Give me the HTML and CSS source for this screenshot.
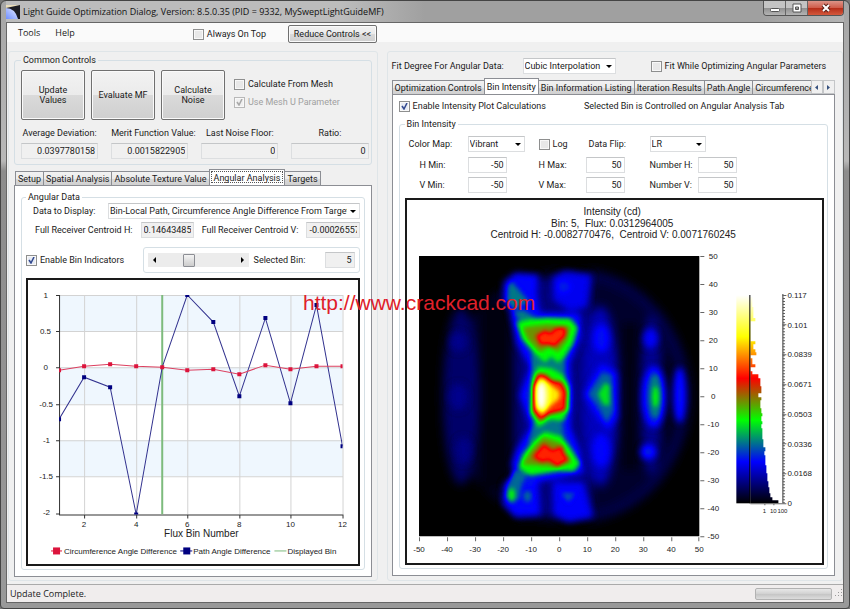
FILE: index.html
```html
<!DOCTYPE html>
<html lang="en">
<head>
    <meta charset="UTF-8">
    <meta name="viewport" content="width=device-width, initial-scale=1.0">
    <title>Light Guide Optimization Dialog</title>
    <link rel="stylesheet" href="styles.css">
</head>
<body>
<div class="window">
    <header class="titlebar">
        <svg class="app-icon" width="14" height="14" viewBox="0 0 14 14" aria-hidden="true">
            <defs>
                <linearGradient id="lens" x1="0" y1="1" x2="1" y2="0">
                    <stop offset="0" stop-color="#6f8fff"/>
                    <stop offset="1" stop-color="#e8ecff"/>
                </linearGradient>
            </defs>
            <rect width="14" height="14" fill="#1c1c22"/>
            <path d="M0 3 Q9 3 12 14 H0 Z" fill="url(#lens)"/>
            <path d="M0 0 H14 L0 3 Z" fill="#e9dcb8"/>
        </svg>
        <span class="title">Light Guide Optimization Dialog, Version: 8.5.0.35 (PID = 9332, MySweptLightGuideMF)</span>
        <div class="window-buttons">
            <button type="button" aria-label="Minimize"><svg width="10" height="10" viewBox="0 0 10 10"><rect x="0.5" y="5.500" width="9" height="3" rx="1" fill="#fff" stroke="#555"/></svg></button>
            <button type="button" aria-label="Maximize"><svg width="10" height="10" viewBox="0 0 10 10"><path d="M1 1 H9 V9 H1 Z M3.500 4 V6.500 H6.500 V4 Z" fill="#fff" stroke="#555" fill-rule="evenodd"/></svg></button>
            <button type="button" class="close" aria-label="Close"><svg width="10" height="10" viewBox="0 0 10 10"><path d="M2 2 L8 8 M8 2 L2 8" stroke="#5a2018" stroke-width="4"/><path d="M2 2 L8 8 M8 2 L2 8" stroke="#fff" stroke-width="2"/></svg></button>
        </div>
    </header>

    <div class="client">
        <nav class="menubar">
            <button type="button" class="menu">Tools</button>
            <button type="button" class="menu">Help</button>
            <label class="check on-top"><input type="checkbox"> Always On Top</label>
            <button type="button" class="btn reduce">Reduce Controls &lt;&lt;</button>
        </nav>

        <main class="columns">
            <section class="panel left">
                <fieldset class="group common">
                    <legend>Common Controls</legend>
                    <div class="actions">
                        <button type="button" class="btn big">Update<br>Values</button>
                        <button type="button" class="btn big">Evaluate MF</button>
                        <button type="button" class="btn big">Calculate<br>Noise</button>
                        <div class="mesh">
                            <label class="check"><input type="checkbox"> Calculate From Mesh</label>
                            <label class="check disabled"><input type="checkbox" checked disabled> Use Mesh U Parameter</label>
                        </div>
                    </div>
                    <div class="readouts">
                        <label>Average Deviation: <input type="text" value="0.0397780158" readonly></label>
                        <label>Merit Function Value: <input type="text" value="0.0015822905" readonly></label>
                        <label>Last Noise Floor: <input type="text" value="0" readonly></label>
                        <label>Ratio: <input type="text" value="0" readonly></label>
                    </div>
                </fieldset>

                <div class="tabs">
                    <button type="button" class="tab">Setup</button>
                    <button type="button" class="tab">Spatial Analysis</button>
                    <button type="button" class="tab">Absolute Texture Value</button>
                    <button type="button" class="tab active focused">Angular Analysis</button>
                    <button type="button" class="tab">Targets</button>
                </div>
                <div class="tab-page">
                    <fieldset class="group angular">
                        <legend>Angular Data</legend>
                        <div class="row display-row">
                            <label for="display">Data to Display:</label>
                            <select id="display"><option>Bin-Local Path, Circumference Angle Difference From Target</option></select>
                        </div>
                        <div class="row centroid-row">
                            <label for="centroidH">Full Receiver Centroid H:</label>
                            <input type="text" id="centroidH" value="0.1464348567" readonly>
                            <label for="centroidV">Full Receiver Centroid V:</label>
                            <input type="text" id="centroidV" value="-0.0002655714" readonly>
                        </div>
                        <div class="row bin-row">
                            <label class="check"><input type="checkbox" checked> Enable Bin Indicators</label>
                            <div class="bin-box">
                                <div class="scroller">
                                    <button type="button" aria-label="Previous bin"><svg width="3" height="6" viewBox="0 0 3 6"><path d="M3 0 V6 L0 3 Z"/></svg></button>
                                    <input type="range" id="binSlider" min="1" max="12" value="5" aria-label="Bin">
                                    <button type="button" aria-label="Next bin"><svg width="3" height="6" viewBox="0 0 3 6"><path d="M0 0 V6 L3 3 Z"/></svg></button>
                                </div>
                                <label for="selectedBin">Selected Bin:</label>
                                <input type="text" id="selectedBin" value="5" readonly>
                            </div>
                        </div>

                        <svg class="chart" viewBox="28 280 329 284" role="img" aria-label="Angle difference by flux bin">
                            <g fill="#eff7fe">
                                <rect x="59" y="295" width="283" height="36"/>
                                <rect x="59" y="367" width="283" height="37"/>
                                <rect x="59" y="440" width="283" height="36"/>
                            </g>
                            <path class="grid-line" d="M59 295.500H342M59 331.500H342M59 367.500H342M59 404.500H342M59 440.500H342M59 476.500H342M84.500 295V514M136.500 295V514M187.500 295V514M239.500 295V514M290.500 295V514M342.500 295V514"/>
                            <path class="axis" d="M59.500 295V514.500H342M56 295.500H59M56 331.500H59M56 367.500H59M56 404.500H59M56 440.500H59M56 476.500H59M56 513.500H59M84.500 514V518M136.500 514V518M187.500 514V518M239.500 514V518M290.500 514V518M342.500 514V518"/>
                            <path d="M162 295V514" stroke="#7dbb7d" stroke-width="2"/>
                            <clipPath id="plotClip"><rect x="59" y="295" width="283" height="219"/></clipPath>
                            <g clip-path="url(#plotClip)">
                                <polyline class="line path-line" points="59,419 84,377 110,387 136,514 162,367 187,295 213,322 239,396 265,318 290,403 316,305 342,446"/>
                                <polyline class="line circ-line" points="59,370 84,366 110,364 136,366 162,367 187,370 213,369 239,374 265,365 290,369 316,366 342,366"/>
                                <path fill="#000080" d="M57 417h4v4h-4zM82 375h4v4h-4zM108 385h4v4h-4zM134 512h4v4h-4zM185 293h4v4h-4zM211 320h4v4h-4zM237 394h4v4h-4zM263 316h4v4h-4zM288 401h4v4h-4zM314 303h4v4h-4zM340 444h4v4h-4z"/>
                                <path fill="#dc143c" d="M57 368h4v4h-4zM82 364h4v4h-4zM108 362h4v4h-4zM134 364h4v4h-4zM160 365h4v4h-4zM185 368h4v4h-4zM211 367h4v4h-4zM237 372h4v4h-4zM263 363h4v4h-4zM288 367h4v4h-4zM314 364h4v4h-4zM340 364h4v4h-4z"/>
                            </g>
                            <g class="tick" text-anchor="end">
                                <text x="48" y="298">1</text>
                                <text x="51" y="334">0.5</text>
                                <text x="48" y="370">0</text>
                                <text x="53" y="407">-0.5</text>
                                <text x="50" y="443">-1</text>
                                <text x="53" y="479">-1.5</text>
                                <text x="50" y="515">-2</text>
                            </g>
                            <g class="tick" text-anchor="middle">
                                <text x="84" y="527">2</text>
                                <text x="136" y="527">4</text>
                                <text x="187" y="527">6</text>
                                <text x="239" y="527">8</text>
                                <text x="290" y="527">10</text>
                                <text x="342" y="527">12</text>
                            </g>
                            <text class="axis-title" x="201" y="537" text-anchor="middle">Flux Bin Number</text>
                            <path d="M51 550.500H62" stroke="#dc143c"/>
                            <rect x="53" y="547" width="7" height="7" fill="#dc143c"/>
                            <path d="M180 550.500H192" stroke="#000080"/>
                            <rect x="183" y="547" width="7" height="7" fill="#000080"/>
                            <path d="M274 550.500H286" stroke="#7dbb7d"/>
                            <g class="legend-text">
                                <text x="64" y="554">Circumference Angle Difference</text>
                                <text x="193" y="554">Path Angle Difference</text>
                                <text x="287" y="554">Displayed Bin</text>
                            </g>
                        </svg>
                    </fieldset>
                </div>
            </section>

            <section class="panel right">
                <div class="row fit-row">
                    <label for="fit">Fit Degree For Angular Data:</label>
                    <select id="fit"><option>Cubic Interpolation</option></select>
                    <label class="check"><input type="checkbox"> Fit While Optimizing Angular Parameters</label>
                </div>
                <div class="tabs scrolling">
                    <div class="tab-strip">
                        <button type="button" class="tab">Optimization Controls</button>
                        <button type="button" class="tab active">Bin Intensity</button>
                        <button type="button" class="tab">Bin Information Listing</button>
                        <button type="button" class="tab">Iteration Results</button>
                        <button type="button" class="tab">Path Angle</button>
                        <button type="button" class="tab">Circumference Parameters</button>
                    </div>
                    <button type="button" class="tab-arrow" aria-label="Scroll tabs left"><svg width="3" height="5" viewBox="0 0 3 5"><path d="M3 0 V5 L0 2.500 Z"/></svg></button>
                    <button type="button" class="tab-arrow" aria-label="Scroll tabs right"><svg width="3" height="5" viewBox="0 0 3 5"><path d="M0 0 V5 L3 2.500 Z"/></svg></button>
                </div>
                <div class="tab-page">
                    <div class="row enable-row">
                        <label class="check"><input type="checkbox" checked> Enable Intensity Plot Calculations</label>
                        <span>Selected Bin is Controlled on Angular Analysis Tab</span>
                    </div>
                    <fieldset class="group intensity">
                        <legend>Bin Intensity</legend>
                        <div class="map-row">
                            <label for="colorMap">Color Map:</label>
                            <select id="colorMap"><option>Vibrant</option></select>
                            <label class="check"><input type="checkbox"> Log</label>
                            <label for="flip">Data Flip:</label>
                            <select id="flip"><option>LR</option></select>
                        </div>
                        <div class="limits">
                            <label for="hMin">H Min:</label><input type="text" id="hMin" value="-50">
                            <label for="hMax">H Max:</label><input type="text" id="hMax" value="50">
                            <label for="numH">Number H:</label><input type="text" id="numH" value="50">
                            <label for="vMin">V Min:</label><input type="text" id="vMin" value="-50">
                            <label for="vMax">V Max:</label><input type="text" id="vMax" value="50">
                            <label for="numV">Number V:</label><input type="text" id="numV" value="50">
                        </div>

                        <svg class="chart" viewBox="407 200 415 363" role="img" aria-label="Intensity map">
                            <defs>
                                <linearGradient id="vibrant" gradientUnits="userSpaceOnUse" x1="0" y1="503" x2="0" y2="295">
                                    <stop offset="0" stop-color="#000"/>
                                    <stop offset="0.2" stop-color="#00f"/>
                                    <stop offset="0.3" stop-color="#008080"/>
                                    <stop offset="0.4" stop-color="#0f0"/>
                                    <stop offset="0.5" stop-color="#808000"/>
                                    <stop offset="0.6" stop-color="#f00"/>
                                    <stop offset="0.8" stop-color="#ff0"/>
                                    <stop offset="1" stop-color="#fff"/>
                                </linearGradient>
                                <!-- grey level to vibrant colour map -->
                                <filter id="colorize" filterUnits="userSpaceOnUse" x="12" y="18" width="840" height="840" color-interpolation-filters="sRGB">
                                    <feGaussianBlur stdDeviation="2"/>
                                    <feComponentTransfer>
                                        <feFuncR type="table" tableValues="0 0 0 0 0 0.5 1 1 1 1 1"/>
                                        <feFuncG type="table" tableValues="0 0 0 0.5 1 0.5 0 0.5 1 1 1"/>
                                        <feFuncB type="table" tableValues="0 0.5 1 0.5 0 0 0 0 0 0.5 1"/>
                                    </feComponentTransfer>
                                </filter>
                                <filter id="wide" filterUnits="userSpaceOnUse" x="0" y="0" width="870" height="870" color-interpolation-filters="sRGB"><feGaussianBlur stdDeviation="14"/></filter>
                                <filter id="mid" filterUnits="userSpaceOnUse" x="0" y="0" width="870" height="870" color-interpolation-filters="sRGB"><feGaussianBlur stdDeviation="10"/></filter>
                                <filter id="fine" filterUnits="userSpaceOnUse" x="0" y="0" width="870" height="870" color-interpolation-filters="sRGB"><feGaussianBlur stdDeviation="6"/></filter>
                            </defs>

                            <g class="plot-title" text-anchor="middle">
                                <text x="612" y="215">Intensity (cd)</text>
                                <text x="612" y="227" xml:space="preserve">Bin: 5,  Flux: 0.0312964005</text>
                                <text x="613" y="238" xml:space="preserve">Centroid H: -0.0082770476,  Centroid V: 0.0071760245</text>
                            </g>

                            <svg x="419" y="256" width="280" height="280" viewBox="12 18 840 840">
                                <g filter="url(#colorize)">
                                    <rect x="-20" y="-20" width="900" height="900" fill="#000"/>
                                    <g filter="url(#wide)">
                                        <ellipse cx="450" cy="438" rx="362" ry="376" fill="#090909"/>
                                        <path d="M520 75 Q640 90 730 200 Q810 310 812 440 Q808 580 720 690 Q640 780 520 800" fill="none" stroke="#0f0f0f" stroke-width="30"/>
                                        <ellipse cx="138" cy="438" rx="54" ry="265" fill="#151515"/>
                                        <rect x="196" y="160" width="90" height="560" fill="#030303"/>
                                        <rect x="300" y="85" width="230" height="715" fill="#191919"/>
                                        <ellipse cx="556" cy="438" rx="54" ry="270" fill="#262626"/>
                                        <rect x="618" y="220" width="52" height="440" fill="#040404"/>
                                        <ellipse cx="708" cy="435" rx="32" ry="240" fill="#1d1d1d"/>
                                        <rect x="746" y="320" width="22" height="250" fill="#050505"/>
                                    </g>
                                    <g filter="url(#mid)">
                                        <ellipse cx="130" cy="275" rx="25" ry="30" fill="#1c1c1c"/>
                                        <ellipse cx="130" cy="440" rx="28" ry="40" fill="#1c1c1c"/>
                                        <ellipse cx="145" cy="600" rx="24" ry="40" fill="#1b1b1b"/>
                                        <path d="M266 95 L300 68 L370 74 L366 130 L378 205 L300 205 L264 150 Z" fill="#343434"/>
                                        <path d="M412 80 L450 62 L530 74 L516 170 L465 185 L414 150 Z" fill="#303030"/>
                                        <ellipse cx="445" cy="110" rx="20" ry="16" fill="#3a3a3a"/>
                                        <path d="M266 700 L300 675 L370 695 L376 794 L300 800 L262 762 Z" fill="#343434"/>
                                        <path d="M412 695 L505 695 L534 800 L460 816 L414 794 Z" fill="#323232"/>
                                        <path d="M286 190 L350 188 L496 190 L498 260 L464 340 L472 440 L466 530 L494 600 L506 670 L430 684 L305 706 L290 640 L304 600 L346 530 L314 435 L344 350 L306 280 Z" fill="#383838"/>
                                        <path d="M506 432 L558 340 L604 366 L606 500 L580 538 L552 510 Z" fill="#383838"/>
                                        <ellipse cx="716" cy="440" rx="36" ry="92" fill="#3a3a3a"/>
                                        <ellipse cx="793" cy="435" rx="19" ry="84" fill="#383838"/>
                                        <ellipse cx="558" cy="265" rx="24" ry="42" fill="#363636"/>
                                        <ellipse cx="558" cy="600" rx="27" ry="50" fill="#343434"/>
                                        <ellipse cx="706" cy="265" rx="22" ry="30" fill="#323232"/>
                                        <ellipse cx="699" cy="605" rx="23" ry="23" fill="#3a3a3a"/>
                                    </g>
                                    <g filter="url(#fine)">
                                        <path d="M278 110 L290 95 L325 135 L345 160 L325 160 L300 180 L276 155 Z" fill="#4b4b4b"/>
                                        <path d="M296 185 L325 180 L370 212 L330 238 Z" fill="#4c4c4c"/>
                                        <path d="M298 660 L340 665 L320 700 L312 745 L290 760 L272 740 L278 705 Z" fill="#484848"/>
                                        <ellipse cx="289" cy="733" rx="11" ry="20" fill="#646464"/>
                                        <ellipse cx="337" cy="738" rx="12" ry="17" fill="#484848"/>
                                        <path d="M438 728 L480 728 L460 757 Z" fill="#444"/>
                                        <rect x="350" y="300" width="98" height="90" fill="#4c4c4c"/>
                                        <path d="M362 490 L438 490 L446 570 L340 580 Z" fill="#4a4a4a"/>
                                        <path d="M520 432 L562 368 L588 376 L594 480 L574 515 L550 470 Z" fill="#474747"/>
                                        <path d="M548 432 L568 398 L584 405 L584 464 L565 465 Z" fill="#606060"/>
                                        <ellipse cx="719" cy="438" rx="19" ry="66" fill="#4c4c4c"/>
                                        <ellipse cx="721" cy="440" rx="10" ry="32" fill="#646464"/>
                                        <path d="M304 216 L350 206 L395 203 L465 205 L488 232 L474 280 L450 320 L428 338 L408 318 L390 338 L356 308 L320 266 Z" fill="#666"/>
                                        <path d="M350 385 L370 350 L410 355 L446 376 L463 410 L462 478 L444 512 L405 508 L370 532 L345 490 Z" fill="#666"/>
                                        <path d="M352 575 L388 544 L440 558 L465 592 L495 640 L477 663 L430 662 L345 676 L310 654 L322 615 Z" fill="#666"/>
                                    </g>
                                    <g filter="url(#fine)">
                                        <path d="M322 232 L395 222 L466 230 L455 272 L428 306 L404 290 L375 306 L340 270 Z" fill="#7c7c7c"/>
                                        <path d="M322 642 L348 600 L385 560 L435 578 L470 636 L425 650 Z" fill="#7c7c7c"/>
                                        <path d="M362 256 L392 240 L405 250 L420 234 L450 230 L452 256 L418 290 L400 282 L375 284 Z" fill="#a2a2a2"/>
                                        <path d="M352 620 L386 580 L412 600 L442 586 L446 610 L462 628 L426 650 L400 630 L380 636 Z" fill="#a0a0a0"/>
                                        <path d="M354 410 L368 370 L392 374 L410 390 L440 396 L454 425 L450 480 L402 492 L375 512 L354 482 Z" fill="#a2a2a2"/>
                                        <path d="M359 405 L374 382 L400 398 L434 425 L432 446 L402 470 L382 494 L360 474 Z" fill="#c8c8c8"/>
                                        <ellipse cx="382" cy="436" rx="20" ry="46" fill="#e0e0e0"/>
                                        <ellipse cx="378" cy="436" rx="12" ry="38" fill="#fff"/>
                                    </g>
                                </g>
                            </svg>

                            <path class="axis-soft" d="M700 256.500h4M700 284.500h4M700 312.500h4M700 340.500h4M700 368.500h4M700 396.500h4M700 424.500h4M700 452.500h4M700 480.500h4M700 508.500h4M700 536.500h4M419.500 537v4M447.500 537v4M475.500 537v4M503.500 537v4M531.500 537v4M559.500 537v4M587.500 537v4M615.500 537v4M643.500 537v4M671.500 537v4M698.500 537v4"/>
                            <g class="tick" text-anchor="middle">
                                <text x="713" y="259">50</text>
                                <text x="713" y="287">40</text>
                                <text x="713" y="315">30</text>
                                <text x="713" y="343">20</text>
                                <text x="713" y="371">10</text>
                                <text x="713" y="399">0</text>
                                <text x="713" y="427">-10</text>
                                <text x="713" y="455">-20</text>
                                <text x="713" y="483">-30</text>
                                <text x="713" y="511">-40</text>
                                <text x="713" y="539">-50</text>
                                <text x="419" y="552">-50</text>
                                <text x="447" y="552">-40</text>
                                <text x="475" y="552">-30</text>
                                <text x="503" y="552">-20</text>
                                <text x="531" y="552">-10</text>
                                <text x="559" y="552">0</text>
                                <text x="587" y="552">10</text>
                                <text x="615" y="552">20</text>
                                <text x="643" y="552">30</text>
                                <text x="671" y="552">40</text>
                                <text x="699" y="552">50</text>
                            </g>

                            <rect x="736" y="295" width="14" height="208" fill="url(#vibrant)"/>
                            <path fill="url(#vibrant)" d="M750 297h2v10h1v11h2v3h-5zM750 341h5v3h-2v5h2v3h1v3h-6zM750 358h2v6h3v3h-5zM750 371h2v3h6v4h2v8h1v7h-3v4h3v3h-1v8h1v5h1v3h-1v5h1v3h-1v4h1v11h1v8h2v4h-1v4h1v10h1v8h1v8h1v6h1v6h1v4h2v3h6v3h-28z"/>
                            <path d="M749.500 295V503" stroke="#000"/>
                            <path d="M782.500 294V503" stroke="#333"/>
                            <path d="M783.500 295V503" stroke="#555" stroke-width="2" stroke-dasharray="1 2"/>
                            <path class="axis-soft" d="M782 295.500h4M782 324.500h4M782 354.500h4M782 384.500h4M782 414.500h4M782 443.500h4M782 473.500h4M782 503.500h4M750 503.500h33M764.500 503v2M773.500 503v2"/>
                            <g class="tick">
                                <text x="787" y="298">0.117</text>
                                <text x="787" y="328">0.101</text>
                                <text x="787" y="357">0.0839</text>
                                <text x="787" y="387">0.0671</text>
                                <text x="787" y="417">0.0503</text>
                                <text x="787" y="447">0.0336</text>
                                <text x="787" y="476">0.0168</text>
                                <text x="787" y="506">0</text>
                            </g>
                            <g class="tiny" text-anchor="middle">
                                <text x="764" y="513">1</text>
                                <text x="773" y="513">10</text>
                                <text x="782" y="513">100</text>
                            </g>
                        </svg>
                    </fieldset>
                </div>
            </section>
        </main>

        <footer class="statusbar">
            <span>Update Complete.</span>
            <progress value="0" max="100" aria-label="Progress"></progress>
            <svg class="grip" width="9" height="9" viewBox="0 0 9 9" aria-hidden="true"><path fill="#999" d="M7 0h1v1h-1zM4 3h1v1h-1zM7 3h1v1h-1zM1 6h1v1h-1zM4 6h1v1h-1zM7 6h1v1h-1z"/></svg>
        </footer>
    </div>

    <div class="watermark">http://www.crackcad.com</div>
</div>
</body>
</html>
```
FILE: styles.css
```css
* {
    box-sizing: border-box;
}
body {
    margin: 0;
    font-family: Roboto, "Liberation Sans", Arial, sans-serif;
    font-size: 9px;
    line-height: 12px;
    color: #1a1a1a;
    background: #777;
}
button, input, select {
    font: inherit;
    color: inherit;
    margin: 0;
}
.window {
    position: relative;
    display: flex;
    flex-direction: column;
    min-height: 100vh;
    padding: 0 5px 5px;
    border: 1px solid #444;
    border-radius: 6px 6px 4px 4px;
    background: linear-gradient(#a5a5a5, #b8b8b8 160px, #8c8c8c 170px, #999);
}

/* title bar */
.titlebar {
    display: flex;
    align-items: center;
    height: 21px;
    font-family: "Open Sans", "Noto Sans", sans-serif;
    color: #111;
    background: linear-gradient(90deg, #bcbcbc 40%, #a0a0a0 50%, #a0a0a0 90%, #b4b4b4);
}
.app-icon {
    margin-right: 3px;
}
.title {
    flex: 1;
    min-width: 0;
    white-space: nowrap;
}
.window-buttons {
    display: flex;
    align-self: flex-start;
    height: 15px;
    border: 1px solid #555;
    border-top: 0;
    border-radius: 0 0 4px 4px;
    overflow: hidden;
}
.window-buttons button {
    display: flex;
    align-items: center;
    justify-content: center;
    width: 22px;
    padding: 0;
    border: 0;
    border-right: 1px solid #666;
    background: linear-gradient(#c4c4c4 50%, #8f8f8f 50%, #b4b4b4);
}
.window-buttons .close {
    width: 35px;
    border-right: 0;
    background: linear-gradient(#dc9488, #cf5a48 50%, #b42c18 50%, #d4583c);
}

/* client area */
.client {
    flex: 1;
    display: flex;
    flex-direction: column;
    border: 1px solid #666;
    background: #f0f0f0;
}
.menubar {
    display: flex;
    align-items: flex-start;
    height: 27px;
    padding-left: 7px;
    background: linear-gradient(#fafafa 19px, #f0f0f0 19px);
}
.menu {
    padding: 4px 4px 0;
    margin-right: 7px;
    border: 0;
    background: none;
    font-family: "Open Sans", "Noto Sans", sans-serif;
}
.on-top {
    margin: 5px 22px 0 107px;
}
.btn {
    padding: 0;
    border: 1px solid #707070;
    border-radius: 2px;
    background: linear-gradient(#f2f2f2, #ebebeb 50%, #dadada 50%, #cfcfcf);
    box-shadow: inset 0 0 0 1px #fafafa;
}
.reduce {
    width: 89px;
    height: 18px;
    margin-top: 2px;
}
.check {
    display: flex;
    align-items: center;
    gap: 3px;
    white-space: nowrap;
}
.disabled {
    color: #a0a0a0;
}
input[type="checkbox"] {
    appearance: none;
    flex: none;
    width: 11px;
    height: 11px;
    border: 1px solid #8e8f8f;
    background: #e8e8e8;
    box-shadow: inset 0 0 0 1px #f8f8f8;
}
input[type="checkbox"]:checked {
    background: #e8ecf4 url("data:image/svg+xml,%3Csvg xmlns='http://www.w3.org/2000/svg' viewBox='0 0 9 9'%3E%3Cpath d='M2 4 L4 7 L7 1' fill='none' stroke='%23334a90' stroke-width='1.6'/%3E%3C/svg%3E");
}
input[type="checkbox"]:disabled {
    border-color: #b8b8b8;
    background: #f0f0f0 url("data:image/svg+xml,%3Csvg xmlns='http://www.w3.org/2000/svg' viewBox='0 0 9 9'%3E%3Cpath d='M2 4 L4 7 L7 1' fill='none' stroke='%23a8a8a8' stroke-width='1.6'/%3E%3C/svg%3E");
}
input[type="text"] {
    width: 100%;
    min-width: 0;
    height: 16px;
    padding: 0 2px;
    border: 1px solid #dcdee0;
    border-top-color: #c4c6c8;
    background: #fff;
    text-align: right;
}
input[readonly] {
    background: #f0f0f0;
}
select {
    appearance: none;
    height: 16px;
    padding: 0 12px 0 1px;
    border: 1px solid #dcdee0;
    border-top-color: #c4c6c8;
    border-radius: 0;
    background: #fff url("data:image/svg+xml,%3Csvg xmlns='http://www.w3.org/2000/svg' width='6' height='3'%3E%3Cpath d='M0 0 H6 L3 3 Z'/%3E%3C/svg%3E") no-repeat right 3px center;
}

.columns {
    flex: 1;
    display: grid;
    grid-template-columns: minmax(0, 370fr) minmax(0, 457fr);
    gap: 9px;
    padding: 1px 0 3px 1px;
}
.panel {
    border: 1px solid #dfe5e8;
    border-radius: 3px;
}
.left {
    padding: 2px 5px 3px 5px;
}
.right {
    padding: 6px 7px 3px 4px;
}
.group {
    min-width: 0;
    margin: 0;
    border: 1px solid #d5dfe5;
    border-radius: 3px;
}
legend {
    padding: 0 2px;
}
.common {
    padding: 4px 2px 5px 6px;
}
.actions {
    display: flex;
    gap: 6px;
}
.big {
    width: 64px;
    height: 50px;
    line-height: 10px;
}
.mesh {
    display: flex;
    flex-direction: column;
    gap: 6px;
    padding: 8px 0 0 3px;
}
.readouts {
    display: grid;
    grid-template-columns: repeat(4, minmax(0, 1fr));
    gap: 13px;
    margin-top: 7px;
    text-align: center;
    white-space: nowrap;
}
.readouts input {
    display: block;
    margin-top: 4px;
}

/* tabs */
.tabs {
    display: flex;
    align-items: flex-end;
    height: 16px;
    margin-top: 4px;
    padding-left: 1px;
}
.tab {
    flex: none;
    height: 14px;
    padding: 0 2px;
    border: 1px solid #8c8e94;
    border-bottom: 0;
    margin-right: -1px;
    background: linear-gradient(#f2f2f2, #ebebeb 50%, #dadada 50%, #d0d0d0);
}
.tab.active {
    height: 16px;
    background: #fff;
}
.tab.focused {
    padding: 0 4px;
    outline: 1px dotted #555;
    outline-offset: -3px;
}
.tab-strip {
    flex: 1;
    display: flex;
    align-items: flex-end;
    min-width: 0;
    overflow: hidden;
}
.tab-arrow {
    flex: none;
    display: flex;
    align-items: center;
    justify-content: center;
    width: 12px;
    height: 14px;
    padding: 0;
    border: 1px solid #c4c6c8;
    background: #f0f0f0;
    fill: #35507e;
}
.tab-page {
    padding: 5px 6px 6px 6px;
    border: 1px solid #8c8e94;
    background: #fff;
}
.row {
    display: flex;
    align-items: center;
    white-space: nowrap;
}

/* angular data */
.angular {
    padding: 0 4px 3px 4px;
}
.display-row label {
    width: 82px;
    padding-left: 7px;
}
.display-row select {
    flex: 1;
    min-width: 0;
}
.centroid-row {
    margin-top: 3px;
    padding-left: 9px;
    gap: 8px;
}
.centroid-row input {
    flex: 1;
    text-align: left;
}
.bin-row {
    margin-top: 9px;
    justify-content: space-between;
}
.bin-box {
    display: flex;
    align-items: center;
    width: 217px;
    height: 26px;
    padding: 0 4px;
    border: 1px solid #d5dfe5;
    border-radius: 3px;
}
.bin-box label {
    flex: 1;
    padding-left: 5px;
}
.bin-box input[type="text"] {
    width: 30px;
}
.scroller {
    display: flex;
    width: 101px;
    height: 14px;
    background: #ececec;
}
.scroller button {
    width: 13px;
    padding: 0;
    border: 0;
    background: none;
    line-height: 8px;
}
.scroller input {
    appearance: none;
    flex: 1;
    min-width: 0;
    height: 14px;
    background: none;
}
.scroller input::-webkit-slider-thumb {
    appearance: none;
    width: 12px;
    height: 13px;
    border: 1px solid #8c8e94;
    border-radius: 1px;
    background: linear-gradient(#f4f4f4, #ccc);
}
.chart {
    display: block;
    width: 100%;
    margin-top: 5px;
    border: 2px solid #1a1a1a;
    background: #fff;
    font-family: "Liberation Sans", Arial, sans-serif;
}
.chart text {
    fill: #222;
}
.tick {
    font-size: 8px;
}
.axis-title {
    font-size: 10px;
}
.legend-text {
    font-size: 8px;
}
.plot-title {
    font-size: 10px;
}
.tiny {
    font-size: 6px;
}
.grid-line {
    stroke: #d3d3d3;
}
.axis {
    fill: none;
    stroke: #333;
}
.axis-soft {
    stroke: #666;
}
.line {
    fill: none;
    stroke-width: 1;
}
.path-line {
    stroke: #33338f;
}
.circ-line {
    stroke: #dc4060;
}

/* bin intensity */
.fit-row label:first-child {
    width: 131px;
}
.fit-row select {
    width: 93px;
}
.fit-row .check {
    margin-left: 35px;
}
.right .tabs {
    padding-left: 0;
}
.enable-row {
    gap: 38px;
}
.intensity {
    margin-top: 6px;
    padding: 6px 3px 3px 5px;
}
.map-row, .limits {
    display: grid;
    align-items: center;
    padding-left: 4px;
    white-space: nowrap;
}
.map-row {
    grid-template-columns: 59px 71px 50px 61px 56px;
}
.map-row select:first-of-type {
    width: 57px;
}
.limits {
    grid-template-columns: 59px 71px 47px 64px 48px 39px;
    row-gap: 4px;
    margin-top: 5px;
}
.limits input {
    width: 39px;
}
.limits label:nth-of-type(3n+1) {
    padding-left: 11px;
}

.statusbar {
    display: flex;
    align-items: center;
    gap: 2px;
    height: 18px;
    padding: 0 0 0 3px;
    border-top: 1px solid #aaa;
    background: #f0eded;
    font-family: "Open Sans", "Noto Sans", sans-serif;
}
.statusbar span {
    flex: 1;
}
progress {
    appearance: none;
    width: 77px;
    height: 12px;
    border: 1px solid #b2b2b2;
    border-radius: 2px;
    background: linear-gradient(#e8e8e8, #d0d0d0 50%, #c4c4c4 50%, #dcdcdc);
}
progress::-webkit-progress-bar {
    background: none;
}

/* stamp over the whole dialog */
.watermark {
    position: absolute;
    top: 290px;
    left: 302px;
    font-family: "Liberation Sans", Arial, sans-serif;
    font-size: 21px;
    line-height: 24px;
    color: #e0202a;
    pointer-events: none;
}
```
